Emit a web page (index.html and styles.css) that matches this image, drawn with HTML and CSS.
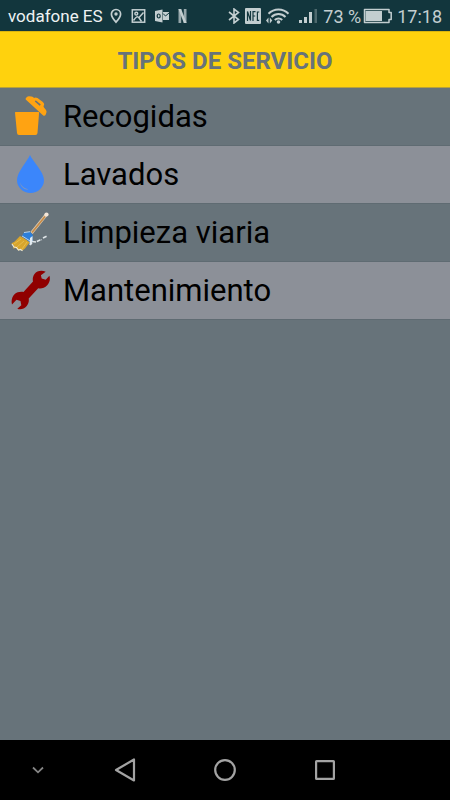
FILE: index.html
```
<!DOCTYPE html>
<html lang="es">
<head>
<meta charset="utf-8">
<meta name="viewport" content="width=device-width, initial-scale=1">
<title>Tipos de servicio</title>
<link rel="stylesheet" href="styles.css">
</head>
<body>
<div class="status">
  <div class="status-group status-left">
    <span class="carrier">vodafone ES</span>
    <svg width="12" height="16" viewBox="0 0 12 16"><path d="M6 1.500a4.600 4.600 0 0 0-4.600 4.600C1.400 9.400 6 14.200 6 14.200s4.600-4.800 4.600-8.100A4.600 4.600 0 0 0 6 1.500z" fill="none" stroke="currentColor" stroke-width="1.700"/><circle cx="6" cy="6" r="1.700" fill="currentColor"/></svg>
    <svg width="15" height="16" viewBox="0 0 14 16"><g fill="none" stroke="currentColor" stroke-width="1.500"><rect x="0.800" y="1.800" width="12.400" height="12.400"/><circle cx="4.800" cy="5.700" r="1.400"/><path d="M2 12.500C5 8 6 8 8 10.500M7.500 9.500L12 4.500M8 10.500l2 3"/></g></svg>
    <svg width="14" height="16" viewBox="0 0 14 16"><path d="M0 3l7.500-1.500v13L0 13z" fill="currentColor"/><path d="M8 4h6v8H8z" fill="currentColor"/><ellipse cx="3.700" cy="8" rx="1.500" ry="2" fill="none" stroke="#12363d" stroke-width="1.200"/><path d="M8 5.500l2.500 2.500L14 5" fill="none" stroke="#12363d"/></svg>
    <svg width="9" height="16" viewBox="0 0 9 16"><path d="M0.500 1h2.700v14H0.500zM5.800 1h2.700v14H5.800z" fill="currentColor" opacity=".75"/><path d="M0.500 1h2.700l5.300 14H5.800z" fill="currentColor"/></svg>
  </div>
  <div class="status-group status-right">
    <svg width="12" height="16" viewBox="0 0 12 16"><path d="M1 4l9.500 7.500L6 15V1l4.500 3.500L1 12" fill="none" stroke="currentColor" stroke-width="1.600"/></svg>
    <svg width="16" height="16" viewBox="0 0 16 16"><rect width="16" height="16" rx="1" fill="currentColor"/><path d="M2.500 13V3.500L5.500 12.500V3M8 13V3.700h2.500M8 8h2.200M14.200 4H12.400v8.300h1.800" fill="none" stroke="#12363d" stroke-width="1.200"/></svg>
    <svg class="wifi" width="24" height="16" viewBox="0 0 24 16"><g fill="none" stroke="currentColor" stroke-width="2"><path d="M2.500 5.800C8 .2 17 .2 22.500 5.800M5.500 9c4-4 10-4 14 0M8.800 12c2-2.100 5.400-2.100 7.400 0"/></g><circle cx="12.500" cy="14" r="1.800" fill="currentColor"/><path d="M0 12.500l2.500-3v6zM6.300 12.500l-2.500-3v6z" fill="currentColor"/></svg>
    <svg class="signal" width="19" height="16" viewBox="0 0 19 16"><path d="M0 12h3v3H0zM5 9h3v6H5zM10 4h3v11h-3z" fill="currentColor"/><path d="M15.500 1h2.500v14h-2.500z" fill="#4c686d"/></svg>
    <span class="percent">73 %</span>
    <svg width="29" height="16" viewBox="0 0 29 16"><path d="M1.500 1.500h24.500v3h2.200v7H26v3H1.500z" fill="none" stroke="currentColor" stroke-width="1.500" stroke-linejoin="round"/><path d="M2.500 3h16.500v10H2.500z" fill="currentColor"/></svg>
    <span class="clock">17:18</span>
  </div>
</div>
<header class="title-bar"><h1>TIPOS DE SERVICIO</h1></header>
<main>
  <ul class="services">
    <li><a href="#recogidas">
      <svg class="icon" viewBox="0 0 40 44"><path d="M5.500 17h23.200q.5 0 .4.700L27.500 38q-.2 2-2 2H9q-1.800 0-2-2L5 17.700q0-.7.500-.7z" fill="#ffa312"/><path fill-rule="evenodd" d="M15.700 4.500q-.4-1 .5-1.800l1-1q.7-.6 2-.5l2.300.2q1 0 1.500.7l1 .8 1.500-.5q1 0 2 .6l5 3.700q1.500 1.200 1.700 2.500l-.7 2.300.5 1 2 2.500q1 1.500.3 3l-.8 2q-.7 1.300-2.300.5zM24.800 6.500l4.900 4.300 1.100-1.300-4.500-3.800q-1-.5-1.500.8z" fill="#ffa312"/></svg>
      <span>Recogidas</span></a></li>
    <li><a href="#lavados">
      <svg class="icon" viewBox="0 0 40 44"><path d="M20 2C17.500 8 7 19 7 27a13.500 13 0 0 0 27 0C34 19 22.500 8 20 2z" fill="#3b86fb"/><path d="M9.800 28.500c1 4 4 7 8.500 7.700-4 1.200-8-2.700-8.500-7.700z" fill="#8497b8"/></svg>
      <span>Lavados</span></a></li>
    <li><a href="#limpieza">
      <svg class="icon" viewBox="0 0 40 44"><path d="M22 30.500l4 .5 4-2 2-.3M33 27l4-2M20 34l2-2" fill="none" stroke="#dfe5e8" stroke-width="1.600" stroke-dasharray="4 1"/><path d="M21.500 22L36 4" stroke="#dccbb5" stroke-width="3"/><path d="M22 21.500L35 5.500" stroke="#c78c48" stroke-width="1.800"/><circle cx="36.500" cy="3.500" r="2.100" fill="#f3e5d8"/><path d="M10 25l10 6-5 6.500-2.500 2-2-1-2 1-2.500-2.500-3 .5 1-3-2.800-2 3.500-2z" fill="#d8a52d"/><path d="M4 33l7-5M7 36l7-6M12 38l5-7" stroke="#e6bd4c" stroke-width="1"/><path d="M2 33l2 3 2.500.5 2 2.500 2-.5 2 1.300" fill="none" stroke="#f0ead5" stroke-width="1.200"/><path d="M12 25l2-3.500 6-.8 2.800 3.300-.3 6-2.500 1.500z" fill="#2d7fda"/><path d="M12 25l9 5.500M14 21.500l6-.8" stroke="#b9d3ec" stroke-width="1"/><path d="M20 27l2.500-2v5l-1 3-2 1z" fill="#e2ebf2"/></svg>
      <span>Limpieza viaria</span></a></li>
    <li><a href="#mantenimiento">
      <svg class="icon" viewBox="0 0 40 44"><path d="M35.700 2.800C32 1 27 1.500 24.500 5c-1.800 2.500-2 5-1.500 7.500L13.500 23c-3-.5-6.500 0-9 2.300C2 28 1 31.500 2 35.500l4.500-4.700 4 1.200.8 4.200-4 3.600c3 1.300 7 .3 9.200-2.500 2-2.600 2.700-5 2.200-7.800l9.500-10.300c3 .6 6.500-.3 9-3 2.500-2.800 3.300-6 2.200-9.400L35.700 10.700l-4-1.200-.8-3.200z" fill="#900000"/></svg>
      <span>Mantenimiento</span></a></li>
  </ul>
</main>
<nav class="nav-bar">
  <button aria-label="Ocultar"><svg width="12" height="8" viewBox="0 0 12 8"><path d="M1 1.500l5 4.800 5-4.800" fill="none" stroke="#858585" stroke-width="1.800"/></svg></button>
  <button aria-label="Atrás"><svg width="22" height="24" viewBox="0 0 22 24"><path d="M20 1.500v21L2 12z" fill="none" stroke="currentColor" stroke-width="2.200" stroke-linejoin="round"/></svg></button>
  <button aria-label="Inicio"><svg width="22" height="22" viewBox="0 0 22 22"><circle cx="11" cy="11" r="9.800" fill="none" stroke="currentColor" stroke-width="2.200"/></svg></button>
  <button aria-label="Recientes"><svg width="20" height="20" viewBox="0 0 20 20"><rect x="1.100" y="1.100" width="17.800" height="17.800" rx=".5" fill="none" stroke="currentColor" stroke-width="2.200"/></svg></button>
</nav>
</body>
</html>
```
FILE: styles.css
```
* { box-sizing: border-box; }
body {
  margin: 0;
  min-height: 100vh;
  display: flex;
  flex-direction: column;
  background: #67737a;
  color: #000;
  font-family: Roboto, "Liberation Sans", sans-serif;
}
svg { display: block; flex: none; }
.status {
  display: flex;
  justify-content: space-between;
  height: 31px;
  padding: 1px 8px 0;
  background: #12363d;
  color: #c3ced0;
  font-size: 18px;
  white-space: nowrap;
}
.status-group { display: flex; align-items: center; }
.status-left { gap: 9px; }
.status-right { gap: 5px; }
.carrier { color: #eef2f3; font-size: 17px; margin-right: -2px; }
.wifi { margin-right: 4px; }
.percent { margin-right: -3px; }
.title-bar {
  display: flex;
  align-items: center;
  justify-content: center;
  height: 57px;
  padding-top: 2px;
  border-top: 1px solid #dcb50f;
  border-bottom: 1px solid #b8a13a;
  background: #ffd20d;
}
h1 {
  margin: 0;
  font-size: 24px;
  line-height: 32px;
  font-weight: 700;
  color: #67737a;
}
main { flex: 1; }
.services { margin: 0; padding: 0; list-style: none; }
.services a {
  display: flex;
  align-items: center;
  gap: 13px;
  height: 58px;
  padding: 1px 10px 0;
  border-bottom: 1px solid #5f6b72;
  color: inherit;
  font-size: 31px;
  line-height: 38px;
  text-decoration: none;
}
.services li:nth-child(even) a { background: #8c9098; }
.icon { width: 40px; height: 44px; }
.nav-bar {
  display: grid;
  grid-template-columns: 3fr 4fr 4fr 4fr 3fr;
  height: 60px;
  background: #000;
  color: #a3a3a3;
}
.nav-bar button {
  display: flex;
  align-items: center;
  justify-content: center;
  padding: 0;
  border: 0;
  background: none;
  color: inherit;
}
```
